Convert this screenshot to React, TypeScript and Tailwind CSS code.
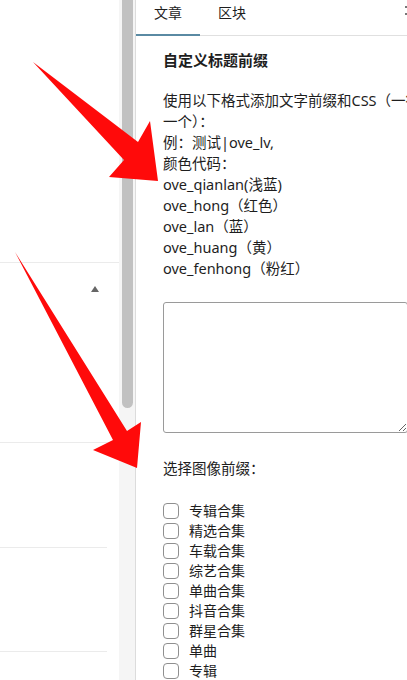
const font = { fontFamily: '"Noto Sans", "Noto Sans CJK SC", sans-serif' };

const bodyLines = [
  "使用以下格式添加文字前缀和CSS（一行",
  "一个）：",
  "例：测试|ove_lv,",
  "颜色代码：",
  "ove_qianlan(浅蓝)",
  "ove_hong（红色）",
  "ove_lan（蓝）",
  "ove_huang（黄）",
  "ove_fenhong（粉红）",
];

const options = ["专辑合集", "精选合集", "车载合集", "综艺合集", "单曲合集", "抖音合集", "群星合集", "单曲", "专辑"];

function Arrows() {
  return (
    <svg className="pointer-events-none absolute inset-0" width="407" height="680" viewBox="0 0 407 680">
      <polygon points="33,62 138,142 150,121 158,181 109,177 124,160" fill="#ff0a0a" />
      <polygon points="15,252 127,431 141,422 137,468 93,450 113,440" fill="#ff0a0a" />
    </svg>
  );
}

export default function App() {
  return (
    <div className="relative flex h-[680px] w-[407px] overflow-hidden bg-white text-[#1e1e1e]" style={font}>
      {/* left list */}
      <div className="flex w-[119px] shrink-0 flex-col">
        <div className="h-[263px] border-b border-[#ebebeb]" />
        <div className="flex h-[180px] justify-end border-b border-[#ebebeb] pr-[19px] pt-[22px]">
          <svg width="10" height="8" viewBox="0 0 10 8">
            <polygon points="5,1 9,7 1,7" fill="#666" />
          </svg>
        </div>
        <div className="h-[105px] w-[107px] border-b border-[#ebebeb]" />
        <div className="h-[104px] w-[107px] border-b border-[#ebebeb]" />
      </div>

      {/* scrollbar */}
      <div className="w-[17px] shrink-0 border-r border-[#dcdcdc] bg-[#f5f5f5] pl-[3px] pr-[3px]">
        <div className="h-[408px] w-[11px] rounded-b-[6px] bg-[#c1c1c1]" />
      </div>

      {/* settings sidebar */}
      <div className="w-[300px] shrink-0">
        <div className="flex h-[36px] items-start border-b border-[#e0e0e0]">
          <div className="flex h-[36px] w-[64px] justify-center border-b-2 border-[#5a8aa3] pt-[3px] text-[14px] leading-[20px]">
            文章
          </div>
          <div className="flex h-[36px] w-[64px] justify-center pt-[3px] text-[14px] leading-[20px]">区块</div>
          <div className="ml-[141px] mt-[6px] flex flex-col gap-[5px]">
            <div className="h-[2px] w-[2px] bg-[#777]" />
            <div className="h-[2px] w-[2px] bg-[#777]" />
          </div>
        </div>

        <div className="pl-[27px]">
          <div className="mt-[13px] text-[15px] font-bold leading-[22px]">自定义标题前缀</div>

          <div className="mt-[19px] text-[14.5px] leading-[21px]">
            {bodyLines.map((l) => (
              <div key={l} className="whitespace-nowrap">
                {l}
              </div>
            ))}
          </div>

          <textarea
            className="mt-[23px] block h-[131px] w-[245px] resize-y rounded-[3px] border border-[#9a9a9a] bg-white"
            defaultValue=""
          />

          <div className="mt-[25px] text-[14.5px] leading-[21px]">选择图像前缀：</div>

          <div className="mt-[22px] flex flex-col">
            {options.map((o) => (
              <label key={o} className="flex h-[20px] items-center text-[14px]">
                <span className="h-[16px] w-[16px] rounded-[4px] border border-[#8f8f8f] bg-white" />
                <span className="ml-[10px] leading-[20px]">{o}</span>
              </label>
            ))}
          </div>
        </div>
      </div>

      <Arrows />
    </div>
  );
}
